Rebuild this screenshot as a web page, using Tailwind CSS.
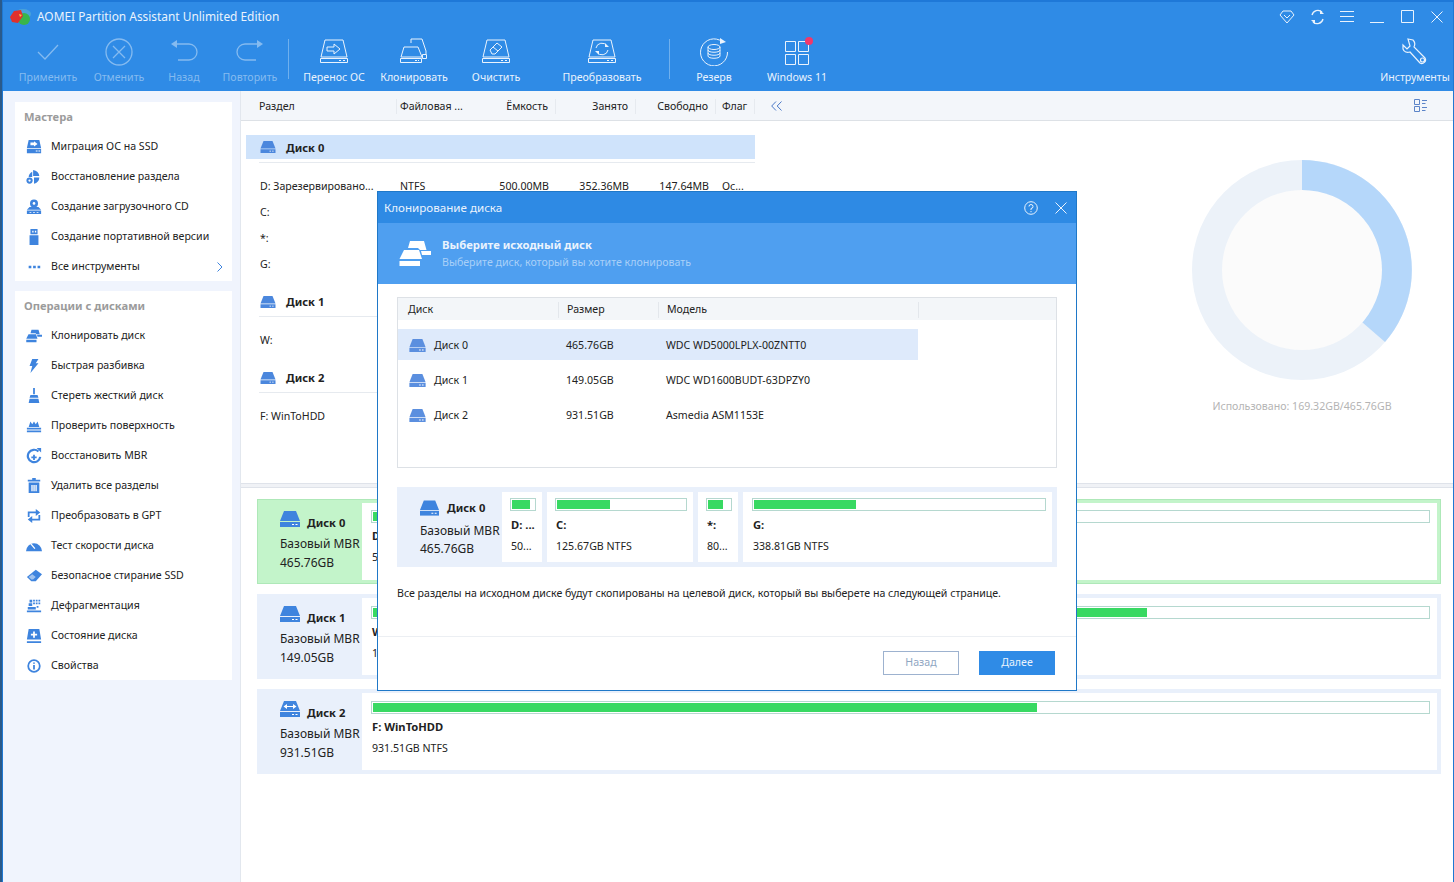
<!DOCTYPE html>
<html lang="ru">
<head>
    <meta charset="UTF-8">
    <title>AOMEI Partition Assistant</title>
    <script src="https://cdn.jsdelivr.net/npm/@tailwindcss/browser@4"></script>
</head>
<body class="bg-[#2a5a8a]">
    <!-- shared icons -->
    <svg class="hidden" xmlns="http://www.w3.org/2000/svg">
        <symbol id="disk" viewBox="0 0 20 16">
            <path fill="currentColor" d="M4 0h12l4 10H0z"/>
            <path fill="currentColor" d="M0 11h20v5H0z"/>
            <path fill="#fff" d="M12 13h2v1h-2zM15.500 13h2v1h-2z"/>
        </symbol>
        <symbol id="clone" viewBox="0 0 32 25">
            <path fill="currentColor" d="M11 0h14l2.500 9H21l-2-2H9z"/>
            <path fill="currentColor" d="M22 10h10v4h-9z"/>
            <path fill="currentColor" d="M5 9h15l3 9H0.500z"/>
            <path fill="currentColor" d="M0.500 20H21v5H0.500z"/>
        </symbol>
    </svg>

    <div class="relative flex h-[882px] w-[1454px] flex-col overflow-hidden border-l-2 border-[#2a5a8a] font-['Noto_Sans',sans-serif] text-[10.6px] text-[#222]">
        <div class="flex h-full flex-col border-x border-[#1f78d2] bg-white">

            <!-- title bar -->
            <header class="bg-[#2f8be6] text-[#eaf3fd]">
                <div class="h-[2px] bg-[#1e78d8]"></div>
                <div class="flex h-[29px] items-center pl-[7px]">
                    <svg class="h-[18px] w-[21px]" viewBox="0 0 21 18">
                        <ellipse cx="13" cy="6" rx="8" ry="5" fill="#4aa3d8"/>
                        <ellipse cx="14" cy="11" rx="6" ry="6" fill="#39b54a"/>
                        <path fill="#e0302c" d="M0 9l4-6 7-1 2 6-5 7-6-1z"/>
                        <path fill="#f5c842" d="M9 6l3 1-2 2z"/>
                    </svg>
                    <span class="ml-[6px] text-[11.900px]">AOMEI Partition Assistant Unlimited Edition</span>
                    <div class="ml-auto flex items-center pr-[1px]">
                        <button class="flex w-[30px] justify-center"><svg class="h-[14px] w-[16px]" viewBox="0 0 16 14" fill="none" stroke="currentColor"><path d="M4 1h8l3 4-7 8-7-8zM5 5l3 3 3-3"/></svg></button>
                        <button class="flex w-[30px] justify-center"><svg class="h-[16px] w-[15px]" viewBox="0 0 15 16" fill="none" stroke="currentColor" stroke-width="1.300"><path d="M2 6a6 6 0 0 1 10-3M13 10a6 6 0 0 1-10 3"/><path fill="currentColor" stroke="none" d="M10 1l4 4h-4zM5 15l-4-4h4z"/></svg></button>
                        <button class="flex w-[30px] justify-center"><svg class="h-[13px] w-[14px]" viewBox="0 0 14 13" stroke="currentColor"><path d="M0 1.500h14M0 6.500h14M0 11.500h14"/></svg></button>
                        <button class="flex w-[30px] justify-center"><svg class="h-[13px] w-[14px]" viewBox="0 0 14 13" stroke="currentColor"><path d="M0 12.500h14"/></svg></button>
                        <button class="flex w-[30px] justify-center"><svg class="h-[13px] w-[13px]" viewBox="0 0 13 13" fill="none" stroke="currentColor"><path d="M.500.500h12v12H.500z"/></svg></button>
                        <button class="flex w-[30px] justify-center"><svg class="h-[12px] w-[12px]" viewBox="0 0 12 12" stroke="currentColor"><path d="M.500.500l11 11M11.500.500l-11 11"/></svg></button>
                    </div>
                </div>

                <!-- toolbar -->
                <div class="flex h-[60px] pl-[11px] pt-[7px]">
                    <div class="flex w-[68px] flex-col items-center text-[#85bbf0]">
                        <svg class="h-[28px] w-[26px]" viewBox="0 0 26 28" fill="none" stroke="currentColor" stroke-width="1.300"><path d="M3 14l7 7L23 7"/></svg>
                        <span class="mt-[4px]">Применить</span>
                    </div>
                    <div class="flex w-[74px] flex-col items-center text-[#85bbf0]">
                        <svg class="h-[28px] w-[28px]" viewBox="0 0 28 28" fill="none" stroke="currentColor" stroke-width="1.300"><circle cx="14" cy="14" r="13"/><path d="M8 8l12 12M20 8L8 20"/></svg>
                        <span class="mt-[4px]">Отменить</span>
                    </div>
                    <div class="flex w-[56px] flex-col items-center text-[#85bbf0]">
                        <svg class="h-[28px] w-[28px]" viewBox="0 0 28 28" fill="none" stroke="currentColor" stroke-width="1.300"><path d="M5 6h14a7 7 0 0 1 0 16H8"/><path fill="currentColor" stroke="none" d="M7 2v8L1 6z"/></svg>
                        <span class="mt-[4px]">Назад</span>
                    </div>
                    <div class="flex w-[76px] flex-col items-center text-[#85bbf0]">
                        <svg class="h-[28px] w-[28px]" viewBox="0 0 28 28" fill="none" stroke="currentColor" stroke-width="1.300"><path d="M23 6H9a7 7 0 0 0 0 16h11"/><path fill="currentColor" stroke="none" d="M21 2v8l6-4z"/></svg>
                        <span class="mt-[4px]">Повторить</span>
                    </div>
                    <div class="mt-[1px] h-[40px] w-px bg-[#6fb0ee]"></div>
                    <div class="flex w-[90px] flex-col items-center">
                        <svg class="h-[28px] w-[28px]" viewBox="0 0 28 28" fill="none" stroke="currentColor"><path d="M5 2h18l4 17H1zM.500 20.500h27v4H.500zM19 22.500h2M23 22.500h2"/><path d="M7 9h7V6l6 5-6 5v-3H7z"/></svg>
                        <span class="mt-[4px]">Перенос ОС</span>
                    </div>
                    <div class="flex w-[70px] flex-col items-center">
                        <svg class="h-[28px] w-[28px]" viewBox="0 0 28 28" fill="none" stroke="currentColor"><path d="M11 5V1h11l4 12v3M4 9h14l4 10H1zM.500 20.500h21v4H.500zM15 22.500h2M18 22.500h1M22.500 16.500h4v4h-4z"/></svg>
                        <span class="mt-[4px]">Клонировать</span>
                    </div>
                    <div class="flex w-[94px] flex-col items-center">
                        <svg class="h-[28px] w-[28px]" viewBox="0 0 28 28" fill="none" stroke="currentColor"><path d="M5 2h18l4 17H1zM.500 20.500h27v4H.500zM19 22.500h2M23 22.500h2"/><path d="M8 12l7-7 5 4-7 7h-3zM11 9l5 4"/></svg>
                        <span class="mt-[4px]">Очистить</span>
                    </div>
                    <div class="flex w-[118px] flex-col items-center">
                        <svg class="h-[28px] w-[28px]" viewBox="0 0 28 28" fill="none" stroke="currentColor"><path d="M5 2h18l4 17H1zM.500 20.500h27v4H.500zM19 22.500h2M23 22.500h2"/><path d="M8 10a6 6 0 0 1 11-2M20 12a6 6 0 0 1-11 2"/><path fill="currentColor" stroke="none" d="M17 5l4 4h-4zM11 17l-4-4h4z"/></svg>
                        <span class="mt-[4px]">Преобразовать</span>
                    </div>
                    <div class="ml-[8px] mt-[1px] h-[40px] w-px bg-[#6fb0ee]"></div>
                    <div class="flex w-[88px] flex-col items-center">
                        <svg class="h-[28px] w-[28px]" viewBox="0 0 28 28" fill="none" stroke="currentColor"><path d="M22 3.500A13.500 13.500 0 1 0 27.500 14"/><path fill="currentColor" stroke="none" d="M20 0l6 4-6 2z"/><ellipse cx="14" cy="9" rx="6" ry="2.500"/><path d="M8 9v9c0 3 12 3 12 0V9M8 12c0 3 12 3 12 0M8 15c0 3 12 3 12 0"/></svg>
                        <span class="mt-[4px]">Резерв</span>
                    </div>
                    <div class="relative flex w-[78px] flex-col items-center">
                        <svg class="h-[28px] w-[26px]" viewBox="0 0 26 28" fill="none" stroke="currentColor"><path d="M1.500 3.500h10v10h-10zM14.500 3.500h10v10h-10zM1.500 16.500h10v10h-10zM14.500 16.500h10v10h-10z"/></svg>
                        <span class="absolute left-[47px] top-[-1px] h-[8px] w-[8px] rounded-full bg-[#f0386b]"></span>
                        <span class="mt-[4px]">Windows 11</span>
                    </div>
                    <div class="ml-auto mr-[3px] flex w-[70px] flex-col items-center">
                        <svg class="h-[28px] w-[26px]" viewBox="0 0 26 28" fill="none" stroke="currentColor" stroke-width="1.200"><path d="M6 1l5 1c2 2 2 5 1 7l11 11c2 3-2 7-5 5L8 14c-3 1-6 0-7-3L1 7l4 4 3-3z"/><circle cx="20.500" cy="22" r="2"/></svg>
                        <span class="mt-[4px] whitespace-nowrap">Инструменты</span>
                    </div>
                </div>
            </header>

            <main class="flex min-h-0 flex-1">
                <!-- left sidebar -->
                <aside class="w-[238px] shrink-0 border-r border-[#e2e7ee] bg-[#f0f4fd] pl-[12px] pr-[8px] pt-[11px]">
                    <section class="bg-white">
                        <h2 class="flex h-[29px] items-center pl-[9px] pt-px text-[11.200px] font-bold text-[#9b9b9b]">Мастера</h2>
                        <ul class="text-[#222]">
                            <li class="flex h-[30px] items-center pt-[2px]"><svg class="ml-[11px] h-[16px] w-[16px] text-[#3e84de]" viewBox="0 0 18 18" fill="currentColor"><path d="M3 1h12l2 9H1zM1 11h16v5H1z"/><path fill="#fff" d="M5 4h4V2.500L13 5.500 9 8.500V7H5zM11 13h2v1h-2zM14 13h2v1h-2z"/></svg><span class="ml-[9px]">Миграция ОС на SSD</span></li>
                            <li class="flex h-[30px] items-center pt-[2px]"><svg class="ml-[11px] h-[16px] w-[16px] text-[#3e84de]" viewBox="0 0 18 18" fill="currentColor"><path d="M8 1v7h7A8 8 0 0 0 8 1zM7 3a7 7 0 0 0-4 6h4zM9 9.500h6a7 7 0 0 1-6 7z"/><circle cx="4" cy="13" r="3.500"/><circle cx="4" cy="13" r="1.300" fill="#fff"/></svg><span class="ml-[9px]">Восстановление раздела</span></li>
                            <li class="flex h-[30px] items-center pt-[2px]"><svg class="ml-[11px] h-[16px] w-[16px] text-[#3e84de]" viewBox="0 0 18 18" fill="currentColor"><circle cx="9" cy="5" r="4.500"/><circle cx="9" cy="5" r="1.500" fill="#fff"/><path d="M4 9h10l3 3H1zM1 13h16v4H1z"/><path fill="#fff" d="M4 14.500h2v1H4zM8 14.500h2v1H8zM12 14.500h2v1h-2z"/></svg><span class="ml-[9px]">Создание загрузочного CD</span></li>
                            <li class="flex h-[30px] items-center pt-[2px]"><svg class="ml-[11px] h-[16px] w-[16px] text-[#3e84de]" viewBox="0 0 18 18" fill="currentColor"><path d="M5 0h8v6H5zM4 7h10v11H4z"/><path fill="#fff" d="M7 2h1.500v2H7zM10 2h1.500v2H10z"/></svg><span class="ml-[9px]">Создание портативной версии</span></li>
                            <li class="flex h-[30px] items-center pt-[2px]"><svg class="ml-[11px] h-[16px] w-[16px] text-[#3e84de]" viewBox="0 0 18 18" fill="currentColor"><path d="M3 7.500h3v3H3zM8 7.500h3v3H8zM13 7.500h3v3h-3z"/></svg><span class="ml-[9px]">Все инструменты</span><svg class="ml-auto mr-[9px] h-[10px] w-[6px] text-[#3e84de]" viewBox="0 0 6 10" fill="none" stroke="currentColor"><path d="M.500.500L5 5 .500 9.500"/></svg></li>
                        </ul>
                    </section>

                    <section class="mt-[10px] bg-white">
                        <h2 class="flex h-[29px] items-center pl-[9px] pt-px text-[11.200px] font-bold text-[#9b9b9b]">Операции с дисками</h2>
                        <ul>
                            <li class="flex h-[30px] items-center pt-[2px]"><svg class="ml-[11px] h-[16px] w-[16px] text-[#3e84de]"><use href="#clone"/></svg><span class="ml-[9px]">Клонировать диск</span></li>
                            <li class="flex h-[30px] items-center pt-[2px]"><svg class="ml-[11px] h-[16px] w-[16px] text-[#3e84de]" viewBox="0 0 18 18" fill="currentColor"><path d="M7 1h7l-3 5h3L5 17l2-8H4z"/></svg><span class="ml-[9px]">Быстрая разбивка</span></li>
                            <li class="flex h-[30px] items-center pt-[2px]"><svg class="ml-[11px] h-[16px] w-[16px] text-[#3e84de]" viewBox="0 0 18 18" fill="currentColor"><path d="M8 0h2v7H8zM5 8h8l1 3H4zM4 12h10l1 5H3z"/></svg><span class="ml-[9px]">Стереть жесткий диск</span></li>
                            <li class="flex h-[30px] items-center pt-[2px]"><svg class="ml-[11px] h-[16px] w-[16px] text-[#3e84de]" viewBox="0 0 18 18" fill="currentColor"><path d="M3 10l2-6 2 3 2-3 2 3 2-3 2 6zM1 11h16v2H1zM1 14h16v2H1z"/></svg><span class="ml-[9px]">Проверить поверхность</span></li>
                            <li class="flex h-[30px] items-center pt-[2px]"><svg class="ml-[11px] h-[16px] w-[16px] text-[#3e84de]" viewBox="0 0 18 18" fill="none" stroke="currentColor" stroke-width="2.500"><path d="M14 4a7 7 0 1 0 2 6"/><path fill="currentColor" stroke="none" d="M12 0h5v5zM8 7.500h2v2h2v2h-2v2H8v-2H6v-2h2z"/></svg><span class="ml-[9px]">Восстановить MBR</span></li>
                            <li class="flex h-[30px] items-center pt-[2px]"><svg class="ml-[11px] h-[16px] w-[16px] text-[#3e84de]" viewBox="0 0 18 18" fill="currentColor"><path d="M7 0h4v2h5v2H2V2h5zM3 5h12v12H3z"/><path fill="#fff" d="M6 8h1.500v7H6zM8.300 8h1.500v7H8.300zM10.600 8h1.500v7h-1.500z"/></svg><span class="ml-[9px]">Удалить все разделы</span></li>
                            <li class="flex h-[30px] items-center pt-[2px]"><svg class="ml-[11px] h-[16px] w-[16px] text-[#3e84de]" viewBox="0 0 18 18" fill="none" stroke="currentColor" stroke-width="2"><path d="M3 10V5h9M15 8v5H6"/><path fill="currentColor" stroke="none" d="M11 1l5 4-5 4zM7 9l-5 4 5 4z"/></svg><span class="ml-[9px]">Преобразовать в GPT</span></li>
                            <li class="flex h-[30px] items-center pt-[2px]"><svg class="ml-[11px] h-[16px] w-[16px] text-[#3e84de]" viewBox="0 0 18 18" fill="currentColor"><path d="M0 15a9 9 0 1 1 18 0z"/><path stroke="#fff" stroke-width="1.500" d="M5 6l5 6"/></svg><span class="ml-[9px]">Тест скорости диска</span></li>
                            <li class="flex h-[30px] items-center pt-[2px]"><svg class="ml-[11px] h-[16px] w-[16px] text-[#3e84de]" viewBox="0 0 18 18" fill="currentColor"><path d="M11 2l7 5-7 8H6L1 10z"/><path fill="#fff" d="M3 10l4-3 4 3-3 3H6z" opacity=".5"/></svg><span class="ml-[9px]">Безопасное стирание SSD</span></li>
                            <li class="flex h-[30px] items-center pt-[2px]"><svg class="ml-[11px] h-[16px] w-[16px] text-[#3e84de]" viewBox="0 0 18 18" fill="currentColor"><path d="M4 2h3v3H4zM8 2h2v2H8zM11 2h2v2h-2zM14 2h2v2h-2zM3 6h4v3H3zM8 5h2v2H8zM11 5h2v2h-2zM14 5h2v2h-2zM2 10h9v3H2zM12 9h2v2h-2zM1 14h16v2H1z"/></svg><span class="ml-[9px]">Дефрагментация</span></li>
                            <li class="flex h-[30px] items-center pt-[2px]"><svg class="ml-[11px] h-[16px] w-[16px] text-[#3e84de]" viewBox="0 0 18 18" fill="currentColor"><path d="M3 1h12l2 12H1zM1 15h16v2H1z"/><path fill="#fff" d="M8 4h2v2.500h2.500v2H10V11H8V8.500H5.500v-2H8z"/></svg><span class="ml-[9px]">Состояние диска</span></li>
                            <li class="flex h-[30px] items-center pt-[2px]"><svg class="ml-[11px] h-[16px] w-[16px] text-[#3e84de]" viewBox="0 0 18 18" fill="none" stroke="currentColor" stroke-width="2"><circle cx="9" cy="9" r="6.500"/><path d="M9 8v5M9 5v1.500"/></svg><span class="ml-[9px]">Свойства</span></li>
                        </ul>
                    </section>
                </aside>

                <div class="flex min-w-0 flex-1 flex-col">
                    <!-- column header -->
                    <div class="flex h-[30px] shrink-0 items-center border-b border-[#dde1e6] bg-[#f3f6fa]">
                        <div class="grid w-[514px] grid-cols-[155px_80px_80px_80px_80px_39px] pt-[2px]">
                            <span class="pl-[18px]">Раздел</span>
                            <span class="border-l border-[#e6eaef] pl-[3px]">Файловая ...</span>
                            <span class="border-r border-[#e6eaef] pr-[7px] text-right">Ёмкость</span>
                            <span class="border-r border-[#e6eaef] pr-[7px] text-right">Занято</span>
                            <span class="border-r border-[#e6eaef] pr-[7px] text-right">Свободно</span>
                            <span class="border-r border-[#e6eaef] pl-[6px]">Флаг</span>
                        </div>
                        <svg class="ml-[16px] h-[10px] w-[11px] text-[#4a78c8]" viewBox="0 0 11 10" fill="none" stroke="currentColor"><path d="M5 .500L.700 5 5 9.500M10.500.500L6.200 5l4.300 4.500"/></svg>
                        <svg class="ml-auto mr-[25px] h-[13px] w-[14px] text-[#5b84c8]" viewBox="0 0 14 13" fill="none" stroke="currentColor"><path d="M.500.500h5v5h-5zM.500 7.500h5v5h-5zM8 1.500h5M8 4.500h3.500M8 8.500h5M8 11.500h3.500"/></svg>
                    </div>

                    <!-- partition list and usage ring -->
                    <div class="flex h-[362px] shrink-0">
                        <div class="w-[514px] shrink-0 pt-[14px]">
                            <div class="ml-[5px] flex h-[24px] w-[509px] items-center bg-[#cfe3fb] pl-[13px] text-[11.200px] font-bold">
                                <svg class="h-[12px] w-[18px] text-[#4b87dd]"><use href="#disk"/></svg><span class="ml-[9px] pt-[2px]">Диск 0</span>
                            </div>
                            <div class="ml-[18px] mt-[3px] h-px bg-[#e6eaef]"></div>
                            <div class="mt-[10px] grid h-[26px] grid-cols-[155px_80px_80px_80px_80px_39px] items-center pt-[2px]">
                                <span class="truncate pl-[19px]">D: Зарезервировано...</span>
                                <span class="pl-[4px]">NTFS</span>
                                <span class="pr-[7px] text-right">500.00MB</span>
                                <span class="pr-[7px] text-right">352.36MB</span>
                                <span class="pr-[7px] text-right">147.64MB</span>
                                <span class="pl-[6px]">Ос...</span>
                            </div>
                            <div class="flex h-[26px] items-center pl-[19px] pt-[2px]">C:</div>
                            <div class="flex h-[26px] items-center pl-[19px] pt-[2px]">*:</div>
                            <div class="flex h-[26px] items-center pl-[19px] pt-[2px]">G:</div>
                            <div class="mt-[13px] flex h-[24px] items-center pl-[18px] text-[11.200px] font-bold">
                                <svg class="h-[12px] w-[18px] text-[#4b87dd]"><use href="#disk"/></svg><span class="ml-[9px]">Диск 1</span>
                            </div>
                            <div class="ml-[18px] mt-[2px] h-px bg-[#e6eaef]"></div>
                            <div class="mt-[10px] flex h-[26px] items-center pl-[19px] pt-[2px]">W:</div>
                            <div class="mt-[13px] flex h-[24px] items-center pl-[18px] text-[11.200px] font-bold">
                                <svg class="h-[12px] w-[18px] text-[#4b87dd]"><use href="#disk"/></svg><span class="ml-[9px]">Диск 2</span>
                            </div>
                            <div class="ml-[18px] mt-[2px] h-px bg-[#e6eaef]"></div>
                            <div class="mt-[10px] flex h-[26px] items-center pl-[19px] pt-[2px]">F: WinToHDD</div>
                        </div>
                        <div class="ml-auto mr-[41px] flex w-[220px] flex-col items-center pt-[39px]">
                            <svg class="h-[220px] w-[220px]" viewBox="0 0 220 220">
                                <circle cx="110" cy="110" r="110" fill="#ecf2f9"/>
                                <path fill="#b5d7fa" d="M110 110V0a110 110 0 0 1 83 182z"/>
                                <circle cx="110" cy="110" r="80" fill="#fbfbfb"/>
                            </svg>
                            <span class="mt-[19px] whitespace-nowrap text-[#b4b4b4]">Использовано: 169.32GB/465.76GB</span>
                        </div>
                    </div>

                    <div class="h-[5px] shrink-0 border-y border-[#dfe3ea] bg-[#f0f2f6]"></div>

                    <!-- disk map -->
                    <div class="flex-1 pl-[16px] pr-[12px] pt-[11px]">
                        <div class="flex h-[85px] border border-[#aee8b8] bg-[#c3f4ca] p-[3px]">
                            <div class="w-[101px] shrink-0 pl-[19px] pt-[8px] text-[12px]">
                                <div class="flex items-start text-[11.200px] font-bold"><svg class="h-[16px] w-[20px] text-[#3e84de]"><use href="#disk"/></svg><span class="ml-[7px] mt-[4px]">Диск 0</span></div>
                                <div class="mt-[3px] whitespace-nowrap">Базовый MBR</div>
                                <div class="mt-[1px]">465.76GB</div>
                            </div>
                            <div class="flex flex-1 bg-white pt-[7px]">
                                <div class="w-[62px] shrink-0 pl-[9px]">
                                    <div class="h-[13px] w-[50px] border border-[#b5d8cf] p-px"><div class="h-full w-[80%] bg-[#38d962]"></div></div>
                                    <div class="ml-px mt-[5px] text-[11.200px] font-bold">D: ...</div>
                                    <div class="ml-px mt-[5px]">500.00MB</div>
                                </div>
                                <div class="flex-1 pl-[9px] pr-[7px]">
                                    <div class="h-[13px] border border-[#b5d8cf] p-px"><div class="h-full w-[35%] bg-[#38d962]"></div></div>
                                    <div class="ml-px mt-[5px] text-[11.200px] font-bold">G:</div>
                                    <div class="ml-px mt-[5px]">338.81GB NTFS</div>
                                </div>
                            </div>
                        </div>
                        <div class="mt-[10px] flex h-[85px] bg-[#e9f0fb] p-[4px]">
                            <div class="w-[101px] shrink-0 pl-[19px] pt-[8px] text-[12px]">
                                <div class="flex items-start text-[11.200px] font-bold"><svg class="h-[16px] w-[20px] text-[#3e84de]"><use href="#disk"/></svg><span class="ml-[7px] mt-[4px]">Диск 1</span></div>
                                <div class="mt-[3px] whitespace-nowrap">Базовый MBR</div>
                                <div class="mt-[1px]">149.05GB</div>
                            </div>
                            <div class="flex-1 bg-white pl-[9px] pr-[7px] pt-[8px]">
                                <div class="h-[13px] border border-[#b5d8cf] p-px"><div class="h-full w-[73.400%] bg-[#38d962]"></div></div>
                                <div class="ml-px mt-[5px] text-[11.200px] font-bold">W: ...</div>
                                <div class="ml-px mt-[5px]">149.05GB NTFS</div>
                            </div>
                        </div>
                        <div class="mt-[10px] flex h-[85px] bg-[#e9f0fb] p-[4px]">
                            <div class="w-[101px] shrink-0 pl-[19px] pt-[8px] text-[12px]">
                                <div class="flex items-start text-[11.200px] font-bold"><svg class="h-[16px] w-[20px] text-[#3e84de]" viewBox="0 0 20 16"><use href="#disk"/><path stroke="#fff" d="M5 5.500h10"/><path fill="#fff" d="M7 3v5L3.500 5.500zM13 3v5l3.500-2.500z"/></svg><span class="ml-[7px] mt-[4px]">Диск 2</span></div>
                                <div class="mt-[3px] whitespace-nowrap">Базовый MBR</div>
                                <div class="mt-[1px]">931.51GB</div>
                            </div>
                            <div class="flex-1 bg-white pl-[9px] pr-[7px] pt-[8px]">
                                <div class="h-[13px] border border-[#b5d8cf] p-px"><div class="h-full w-[62.900%] bg-[#38d962]"></div></div>
                                <div class="ml-px mt-[5px] text-[11.200px] font-bold">F: WinToHDD</div>
                                <div class="ml-px mt-[5px]">931.51GB NTFS</div>
                            </div>
                        </div>
                    </div>
                </div>
            </main>
        </div>

        <!-- clone dialog -->
        <div class="absolute left-[375px] top-[191px] flex h-[500px] w-[700px] flex-col border border-[#1f78c8] bg-white">
            <div class="flex h-[31px] shrink-0 items-center bg-[#2e8ae4] pl-[6px] text-[11.600px] text-[#eaf3fd]">
                <span>Клонирование диска</span>
                <svg class="ml-auto h-[14px] w-[14px]" viewBox="0 0 14 14" fill="none" stroke="currentColor"><circle cx="7" cy="7" r="6.300"/><path d="M5 5.500a2 2 0 1 1 2 2v1.500M7 10v1.200"/></svg>
                <svg class="ml-[17px] mr-[9px] h-[12px] w-[12px]" viewBox="0 0 12 12" stroke="currentColor"><path d="M.500.500l11 11M11.500.500l-11 11"/></svg>
            </div>
            <div class="flex h-[61px] shrink-0 items-center bg-[#4f9ff0] pl-[21px]">
                <svg class="h-[25px] w-[32px] text-white"><use href="#clone"/></svg>
                <div class="ml-[11px] pt-px">
                    <div class="text-[11.300px] font-bold text-[#eaf3fd]">Выберите исходный диск</div>
                    <div class="mt-px text-[#a9d0f8]">Выберите диск, который вы хотите клонировать</div>
                </div>
            </div>

            <div class="mx-[19px] mt-[13px] h-[171px] shrink-0 border border-[#dde1e6]">
                <div class="grid h-[22px] grid-cols-[161px_100px_260px] items-center bg-[#f3f6f9] pt-[2px]">
                    <span class="border-r border-[#e3e7ec] pl-[10px]">Диск</span>
                    <span class="border-r border-[#e3e7ec] pl-[8px]">Размер</span>
                    <span class="border-r border-[#e3e7ec] pl-[8px]">Модель</span>
                </div>
                <div class="mt-[9px] grid h-[31px] w-[520px] grid-cols-[168px_100px_252px] items-center bg-[#deeafb] pt-[2px]">
                    <span class="flex items-center pl-[10px]"><svg class="h-[13px] w-[19px] text-[#5b8fdf]"><use href="#disk"/></svg><span class="ml-[7px]">Диск 0</span></span>
                    <span>465.76GB</span>
                    <span>WDC WD5000LPLX-00ZNTT0</span>
                </div>
                <div class="mt-[4px] grid h-[31px] w-[520px] grid-cols-[168px_100px_252px] items-center pt-[2px]">
                    <span class="flex items-center pl-[10px]"><svg class="h-[13px] w-[19px] text-[#5b8fdf]"><use href="#disk"/></svg><span class="ml-[7px]">Диск 1</span></span>
                    <span>149.05GB</span>
                    <span>WDC WD1600BUDT-63DPZY0</span>
                </div>
                <div class="mt-[4px] grid h-[31px] w-[520px] grid-cols-[168px_100px_252px] items-center pt-[2px]">
                    <span class="flex items-center pl-[10px]"><svg class="h-[13px] w-[19px] text-[#5b8fdf]"><use href="#disk"/></svg><span class="ml-[7px]">Диск 2</span></span>
                    <span>931.51GB</span>
                    <span>Asmedia ASM1153E</span>
                </div>
            </div>

            <!-- source disk layout -->
            <div class="mx-[19px] mt-[19px] flex h-[80px] shrink-0 gap-[5px] bg-[#e9f0fb] p-[5px]">
                <div class="w-[95px] shrink-0 pl-[18px] pt-[8px] text-[12px]">
                    <div class="flex items-center text-[11.200px] font-bold"><svg class="h-[16px] w-[19px] text-[#3e84de]"><use href="#disk"/></svg><span class="ml-[8px]">Диск 0</span></div>
                    <div class="mt-[5px] whitespace-nowrap">Базовый MBR</div>
                    <div>465.76GB</div>
                </div>
                <div class="w-[40px] shrink-0 bg-white pl-[8px] pt-[6px]">
                    <div class="h-[13px] w-[26px] border border-[#b5d8cf] p-px"><div class="h-full w-[80%] bg-[#38d962]"></div></div>
                    <div class="ml-px mt-[6px] whitespace-nowrap text-[11.200px] font-bold">D: ...</div>
                    <div class="ml-px mt-[5px]">50...</div>
                </div>
                <div class="w-[146px] shrink-0 bg-white pl-[8px] pr-[6px] pt-[6px]">
                    <div class="h-[13px] border border-[#b5d8cf] p-px"><div class="h-full w-[41.500%] bg-[#38d962]"></div></div>
                    <div class="ml-px mt-[6px] text-[11.200px] font-bold">C:</div>
                    <div class="ml-px mt-[5px]">125.67GB NTFS</div>
                </div>
                <div class="w-[40px] shrink-0 bg-white pl-[8px] pt-[6px]">
                    <div class="h-[13px] w-[26px] border border-[#b5d8cf] p-px"><div class="h-full w-[70%] bg-[#38d962]"></div></div>
                    <div class="ml-px mt-[6px] text-[11.200px] font-bold">*:</div>
                    <div class="ml-px mt-[5px]">80...</div>
                </div>
                <div class="flex-1 bg-white pl-[9px] pr-[6px] pt-[6px]">
                    <div class="h-[13px] border border-[#b5d8cf] p-px"><div class="h-full w-[35%] bg-[#38d962]"></div></div>
                    <div class="ml-px mt-[6px] text-[11.200px] font-bold">G:</div>
                    <div class="ml-px mt-[5px]">338.81GB NTFS</div>
                </div>
            </div>

            <p class="ml-[19px] mt-[19px]">Все разделы на исходном диске будут скопированы на целевой диск, который вы выберете на следующей странице.</p>

            <div class="mt-auto flex h-[54px] items-center justify-end gap-[20px] border-t border-[#eceff3] pb-[2px] pr-[21px]">
                <button class="h-[24px] w-[76px] border border-[#9db2cf] text-[#8fa6c2]">Назад</button>
                <button class="h-[24px] w-[76px] bg-[#2f8be6] text-[#eaf3fd]">Далее</button>
            </div>
        </div>
    </div>
</body>
</html>
